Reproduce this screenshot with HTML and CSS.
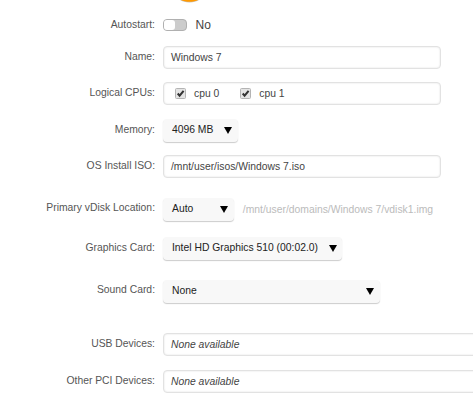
FILE: index.html
```html
<!DOCTYPE html>
<html lang="en">
<head>
    <meta charset="UTF-8">
    <meta name="viewport" content="width=device-width, initial-scale=1.0">
    <title>Windows 7</title>
    <link rel="stylesheet" href="styles.css">
</head>
<body>
    <div class="logo">
        <svg width="26" height="3" viewBox="0 0 26 3"><path d="M3 0C7 3.2 18 3.2 22 0z" fill="#c9c3ba"/><path d="M4 0C8 2.4 17 2.4 21 0z" fill="#f90"/></svg>
    </div>

    <form class="vm-form">
        <div class="row autostart">
            <span class="label">Autostart:</span>
            <span class="switch"><span class="knob"></span></span>
            <span class="switch-text">No</span>
        </div>

        <div class="row name">
            <span class="label">Name:</span>
            <div class="field">Windows 7</div>
        </div>

        <div class="row cpus">
            <span class="label">Logical CPUs:</span>
            <div class="field cpu-list">
                <span class="cpu"><svg class="check" viewBox="0 0 11 11"><rect x=".5" y=".5" width="10" height="10" rx="1" fill="#e4e4e4" stroke="#b4b4b4"/><path d="M2.7 5.5L4.6 7.7L8.6 2.8" fill="none" stroke="#333" stroke-width="2"/></svg>cpu 0</span>
                <span class="cpu"><svg class="check" viewBox="0 0 11 11"><rect x=".5" y=".5" width="10" height="10" rx="1" fill="#e4e4e4" stroke="#b4b4b4"/><path d="M2.7 5.5L4.6 7.7L8.6 2.8" fill="none" stroke="#333" stroke-width="2"/></svg>cpu 1</span>
            </div>
        </div>

        <div class="row memory">
            <span class="label">Memory:</span>
            <div class="select">4096 MB<span class="arrow"></span></div>
        </div>

        <div class="row iso">
            <span class="label">OS Install ISO:</span>
            <div class="field">/mnt/user/isos/Windows 7.iso</div>
        </div>

        <div class="row vdisk">
            <span class="label">Primary vDisk Location:</span>
            <div class="select">Auto<span class="arrow"></span></div>
            <span class="path">/mnt/user/domains/Windows 7/vdisk1.img</span>
        </div>

        <div class="row graphics">
            <span class="label">Graphics Card:</span>
            <div class="select">Intel HD Graphics 510 (00:02.0)<span class="arrow"></span></div>
        </div>

        <div class="row sound">
            <span class="label">Sound Card:</span>
            <div class="select">None<span class="arrow"></span></div>
        </div>

        <div class="row usb">
            <span class="label">USB Devices:</span>
            <div class="field wide">None available</div>
        </div>

        <div class="row pci">
            <span class="label">Other PCI Devices:</span>
            <div class="field wide">None available</div>
        </div>
    </form>
</body>
</html>
```
FILE: styles.css
```css
body {
    margin: 0;
    height: 400px;
    overflow: hidden;
    background-color: #fff;
    font-family: "Liberation Sans", Arial, sans-serif;
    font-size: 10.35px;
    color: #444;
}
.logo {
    height: 3px;
    padding-left: 177px;
}
.logo svg {
    display: block;
}
.row {
    display: flex;
    height: 23px;
    line-height: 22px;
    white-space: nowrap;
}
.label {
    flex: none;
    width: 155px;
    margin-right: 8.4px;
    line-height: 22px;
    text-align: right;
    color: #555;
}
.autostart .label,
.vdisk .label,
.sound .label {
    line-height: 20px;
}
.name .label,
.cpus .label {
    line-height: 21px;
}
.autostart {
    margin-top: 12px;
}
.name {
    margin-top: 8px;
}
.cpus {
    margin-top: 13px;
}
.memory {
    margin-top: 14px;
}
.iso {
    margin-top: 13px;
}
.vdisk {
    margin-top: 20px;
}
.graphics {
    margin-top: 16px;
}
.sound {
    margin-top: 20px;
}
.usb {
    margin-top: 30px;
}
.pci {
    margin-top: 14px;
}
.field {
    flex: none;
    box-sizing: border-box;
    width: 277.4px;
    height: 23px;
    padding-left: 6.6px;
    border: 1px solid #e2e2e2;
    border-radius: 4px;
    box-shadow: inset 0 0 2px #ddd;
}
.field.wide {
    width: 330px;
    font-style: italic;
}
.cpu-list {
    display: flex;
    gap: 21px;
    padding-left: 10.6px;
    line-height: 20px;
}
.cpu {
    display: flex;
    align-items: center;
}
.check {
    width: 11px;
    height: 11px;
    margin-right: 8px;
}
.select {
    display: flex;
    flex: none;
    justify-content: space-between;
    align-items: center;
    box-sizing: border-box;
    height: 23px;
    padding: 0 5.6px 1px 8.6px;
    border-radius: 4px;
    background-color: #f8f8f8;
    box-shadow: 0 1px 1px #ccc;
    color: #222;
}
.arrow {
    border: 4px solid transparent;
    border-top: 7px solid #000;
    border-bottom: 0;
}
.memory .select {
    width: 74.6px;
}
.vdisk .select {
    width: 70.4px;
}
.graphics .select {
    width: 179px;
}
.sound .select {
    width: 216.4px;
}
.path {
    margin-left: 9px;
    line-height: 23px;
    color: #bbb;
}
.switch {
    box-sizing: border-box;
    width: 24px;
    height: 12px;
    margin-top: 4px;
    border: 1px solid #b0b0b0;
    border-radius: 4px;
    background-color: #ccc;
}
.knob {
    display: block;
    width: 11px;
    height: 10px;
    border-radius: 3px;
    background-color: #fff;
}
.switch-text {
    margin-left: 8.2px;
    line-height: 20px;
    font-size: 12px;
}
```
